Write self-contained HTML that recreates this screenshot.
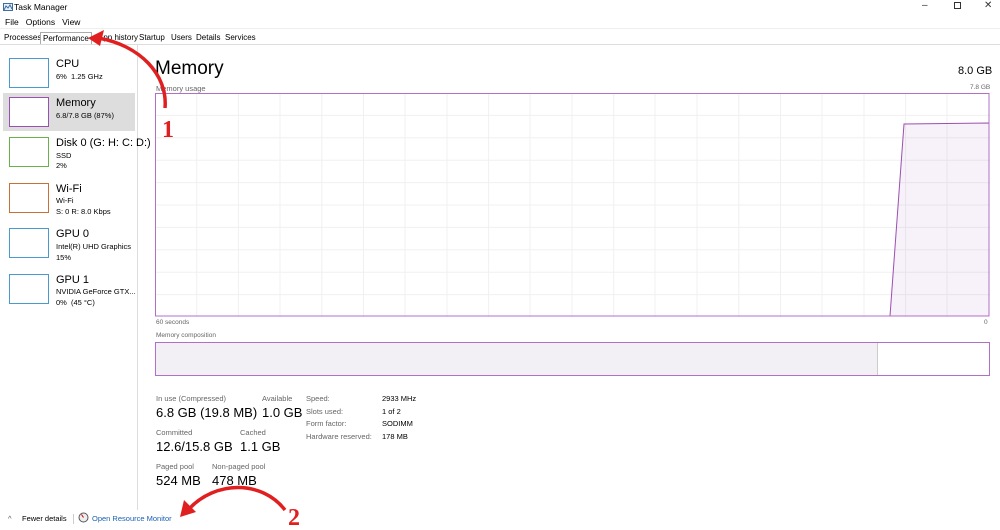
<!DOCTYPE html>
<html><head><meta charset="utf-8"><style>
*{margin:0;padding:0;box-sizing:border-box}
body{width:1000px;height:530px;background:#fff;font-family:"Liberation Sans",sans-serif;color:#000;position:relative;overflow:hidden}
.a{position:absolute;white-space:nowrap}
.s{font-size:8px;color:#666}
.t{font-size:9px}
.tab{position:absolute;top:32px;height:12px;font-size:8px;line-height:12px;padding:0 2px}
.th{position:absolute;left:9px;width:40px;height:30px;border:1px solid}
.nm{font-size:11px}
.sub{font-size:7.5px}
.lb{font-size:7.5px;color:#666}
.big{font-size:13px}
</style></head><body>
<svg class="a" style="left:3px;top:3px" width="10" height="8"><rect x="0.5" y="0.5" width="9" height="7" fill="#e8f0fa" stroke="#3a6ea5"/><path d="M1 7 L3 3 L5 5 L7 2 L9 6" stroke="#3a6ea5" fill="none"/></svg>
<div class="a t" style="left:14px;top:2px;font-size:8.5px">Task Manager</div>
<div class="a t" style="left:5px;top:17px;font-size:8.5px">File&nbsp;&nbsp;&nbsp;Options&nbsp;&nbsp;&nbsp;View</div>
<div class="a" style="left:922px;top:0;font-size:10px;color:#333">–</div>
<div class="a" style="left:954px;top:2px;width:7px;height:7px;border:1px solid #333"></div>
<div class="a" style="left:984px;top:0;font-size:10px;color:#333">✕</div>
<div class="a" style="left:0;top:28px;width:1000px;height:1px;background:#eee"></div>
<div class="a" style="left:0;top:44px;width:1000px;height:1px;background:#ddd"></div>
<div class="tab" style="left:2px">Processes</div>
<div class="tab" style="left:40px;border:1px solid #aaa;border-bottom:none;background:#fff">Performance</div>
<div class="tab" style="left:96px">App history</div>
<div class="tab" style="left:137px">Startup</div>
<div class="tab" style="left:169px">Users</div>
<div class="tab" style="left:194px">Details</div>
<div class="tab" style="left:223px">Services</div>
<div class="a" style="left:137px;top:45px;width:1px;height:465px;background:#ddd"></div>
<div class="a" style="left:3px;top:93px;width:132px;height:38px;background:#ddd"></div>
<div class="th" style="top:58px;border-color:#4a9ad0"></div>
<div class="a nm" style="left:56px;top:58px">CPU</div><div class="a sub" style="left:56px;top:72px">6%&nbsp; 1.25 GHz</div>
<div class="th" style="top:97px;border-color:#9b4fb0;background:#fff"></div>
<div class="a nm" style="left:56px;top:97px">Memory</div><div class="a sub" style="left:56px;top:111px">6.8/7.8 GB (87%)</div>
<div class="th" style="top:137px;border-color:#6ab04c"></div>
<div class="a nm" style="left:56px;top:137px">Disk 0 (G: H: C: D:)</div><div class="a sub" style="left:56px;top:151px">SSD</div><div class="a sub" style="left:56px;top:161px">2%</div>
<div class="th" style="top:183px;border-color:#c8703a"></div>
<div class="a nm" style="left:56px;top:183px">Wi-Fi</div><div class="a sub" style="left:56px;top:196px">Wi-Fi</div><div class="a sub" style="left:56px;top:207px">S: 0 R: 8.0 Kbps</div>
<div class="th" style="top:228px;border-color:#4a9ad0"></div>
<div class="a nm" style="left:56px;top:228px">GPU 0</div><div class="a sub" style="left:56px;top:242px">Intel(R) UHD Graphics</div><div class="a sub" style="left:56px;top:253px">15%</div>
<div class="th" style="top:274px;border-color:#4a9ad0"></div>
<div class="a nm" style="left:56px;top:274px">GPU 1</div><div class="a sub" style="left:56px;top:287px">NVIDIA GeForce GTX...</div><div class="a sub" style="left:56px;top:298px">0%&nbsp; (45 °C)</div>
<div class="a" style="left:155px;top:58px;font-size:19px">Memory</div>
<div class="a" style="left:958px;top:65px;font-size:11px">8.0 GB</div>
<div class="a lb" style="left:156px;top:84px">Memory usage</div>
<div class="a lb" style="left:970px;top:84px;font-size:6.5px">7.8 GB</div>
<svg class="a" style="left:155px;top:93px" width="835" height="224">
<g stroke="#f0f0f0" stroke-width="1">
<path d="M41.7 0V224M83.4 0V224M125 0V224M166.8 0V224M208.5 0V224M250 0V224M292 0V224M333.6 0V224M375 0V224M417 0V224M458.7 0V224M500 0V224M542 0V224M583.8 0V224M625.5 0V224M667 0V224M709 0V224M750.6 0V224M792 0V224"/>
<path d="M0 22.4H835M0 44.8H835M0 67.2H835M0 89.6H835M0 112H835M0 134.4H835M0 156.8H835M0 179.2H835M0 201.6H835"/>
</g>
<path d="M735 223 L749 31 L834 30 L834 223Z" fill="rgba(155,79,176,0.08)" stroke="#9b4fb0"/>
<rect x="0.5" y="0.5" width="833.5" height="222.5" fill="none" stroke="#b070c8"/>
</svg>
<div class="a lb" style="left:156px;top:319px;font-size:6.5px">60 seconds</div>
<div class="a lb" style="left:984px;top:319px;font-size:6.5px">0</div>
<div class="a lb" style="left:156px;top:332px;font-size:6.5px">Memory composition</div>
<div class="a" style="left:155px;top:342px;width:835px;height:34px;border:1px solid #b070c8;background:#fff"><div style="width:722px;height:100%;background:#f2f0f4;border-right:1px solid #ccc"></div></div>
<div class="a lb" style="left:156px;top:394px">In use (Compressed)</div><div class="a big" style="left:156px;top:405px">6.8 GB (19.8 MB)</div>
<div class="a lb" style="left:262px;top:394px">Available</div><div class="a big" style="left:262px;top:405px">1.0 GB</div>
<div class="a lb" style="left:156px;top:428px">Committed</div><div class="a big" style="left:156px;top:439px">12.6/15.8 GB</div>
<div class="a lb" style="left:240px;top:428px">Cached</div><div class="a big" style="left:240px;top:439px">1.1 GB</div>
<div class="a lb" style="left:156px;top:462px">Paged pool</div><div class="a big" style="left:156px;top:473px">524 MB</div>
<div class="a lb" style="left:212px;top:462px">Non-paged pool</div><div class="a big" style="left:212px;top:473px">478 MB</div>
<div class="a lb" style="left:306px;top:394px">Speed:</div><div class="a sub" style="left:382px;top:394px">2933 MHz</div>
<div class="a lb" style="left:306px;top:407px">Slots used:</div><div class="a sub" style="left:382px;top:407px">1 of 2</div>
<div class="a lb" style="left:306px;top:419px">Form factor:</div><div class="a sub" style="left:382px;top:419px">SODIMM</div>
<div class="a lb" style="left:306px;top:432px">Hardware reserved:</div><div class="a sub" style="left:382px;top:432px">178 MB</div>
<div class="a sub" style="left:8px;top:514px;color:#555">^</div>
<div class="a sub" style="left:22px;top:514px">Fewer details</div>
<div class="a" style="left:73px;top:514px;width:1px;height:10px;background:#ccc"></div>
<svg class="a" style="left:78px;top:512px" width="11" height="11"><circle cx="5.5" cy="5.5" r="4.5" fill="#eee" stroke="#555"/><path d="M5.5 5.5L3.5 2.5" stroke="#c00"/></svg>
<div class="a sub" style="left:92px;top:514px;color:#1a5fb4">Open Resource Monitor</div>
<svg class="a" style="left:0;top:0" width="1000" height="530">
<path d="M165 108 C168 75 140 45 98 38" stroke="#e02020" stroke-width="3.5" fill="none"/>
<path d="M88 38 L104 30 L100 46Z" fill="#e02020"/>
<path d="M285 510 C262 480 215 480 188 510" stroke="#e02020" stroke-width="3.5" fill="none"/>
<path d="M180 517 L184 500 L196 512Z" fill="#e02020"/>
<text x="162" y="137" font-family="Liberation Serif" font-weight="bold" font-size="24" fill="#e02020">1</text>
<text x="288" y="525" font-family="Liberation Serif" font-weight="bold" font-size="24" fill="#e02020">2</text>
</svg>
</body></html>
